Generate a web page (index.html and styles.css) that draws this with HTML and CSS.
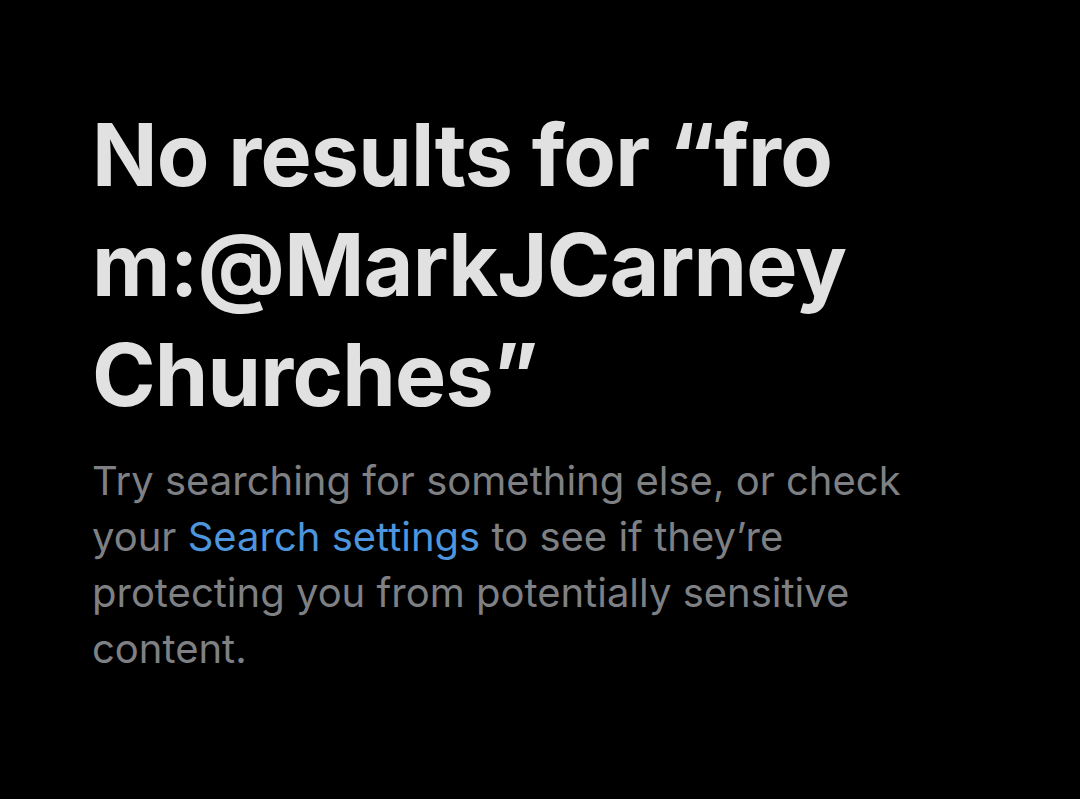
FILE: index.html
```html
<!DOCTYPE html>
<html lang="en">
<head>
<meta charset="utf-8">
<link rel="stylesheet" href="styles.css">
</head>
<body>
<main class="empty">
  <h1 class="empty-title">No results for “fro<br>m:@MarkJCarney<br>Churches”</h1>
  <p class="empty-text">Try searching for something else, or check your <a class="link" href="#">Search settings</a> to see if they’re protecting you from potentially sensitive content.</p>
</main>
</body>
</html>
```
FILE: styles.css
```css
html, body {
  margin: 0;
  padding: 0;
  background: #000;
}
body {
  width: 1080px;
  height: 799px;
  overflow: hidden;
  font-family: Inter, "Noto Sans", sans-serif;
}
.empty {
  padding: 100px 0 0 92px;
  width: 840px;
}
.empty-title {
  margin: 0;
  font-size: 86px;
  line-height: 110px;
  font-weight: 700;
  color: #e1e1e1;
  letter-spacing: -0.8px;
}
.empty-text {
  margin: 23px 0 0;
  font-size: 40px;
  line-height: 56px;
  color: #7e8084;
}
.link {
  color: #4d95dc;
  text-decoration: none;
}
```
